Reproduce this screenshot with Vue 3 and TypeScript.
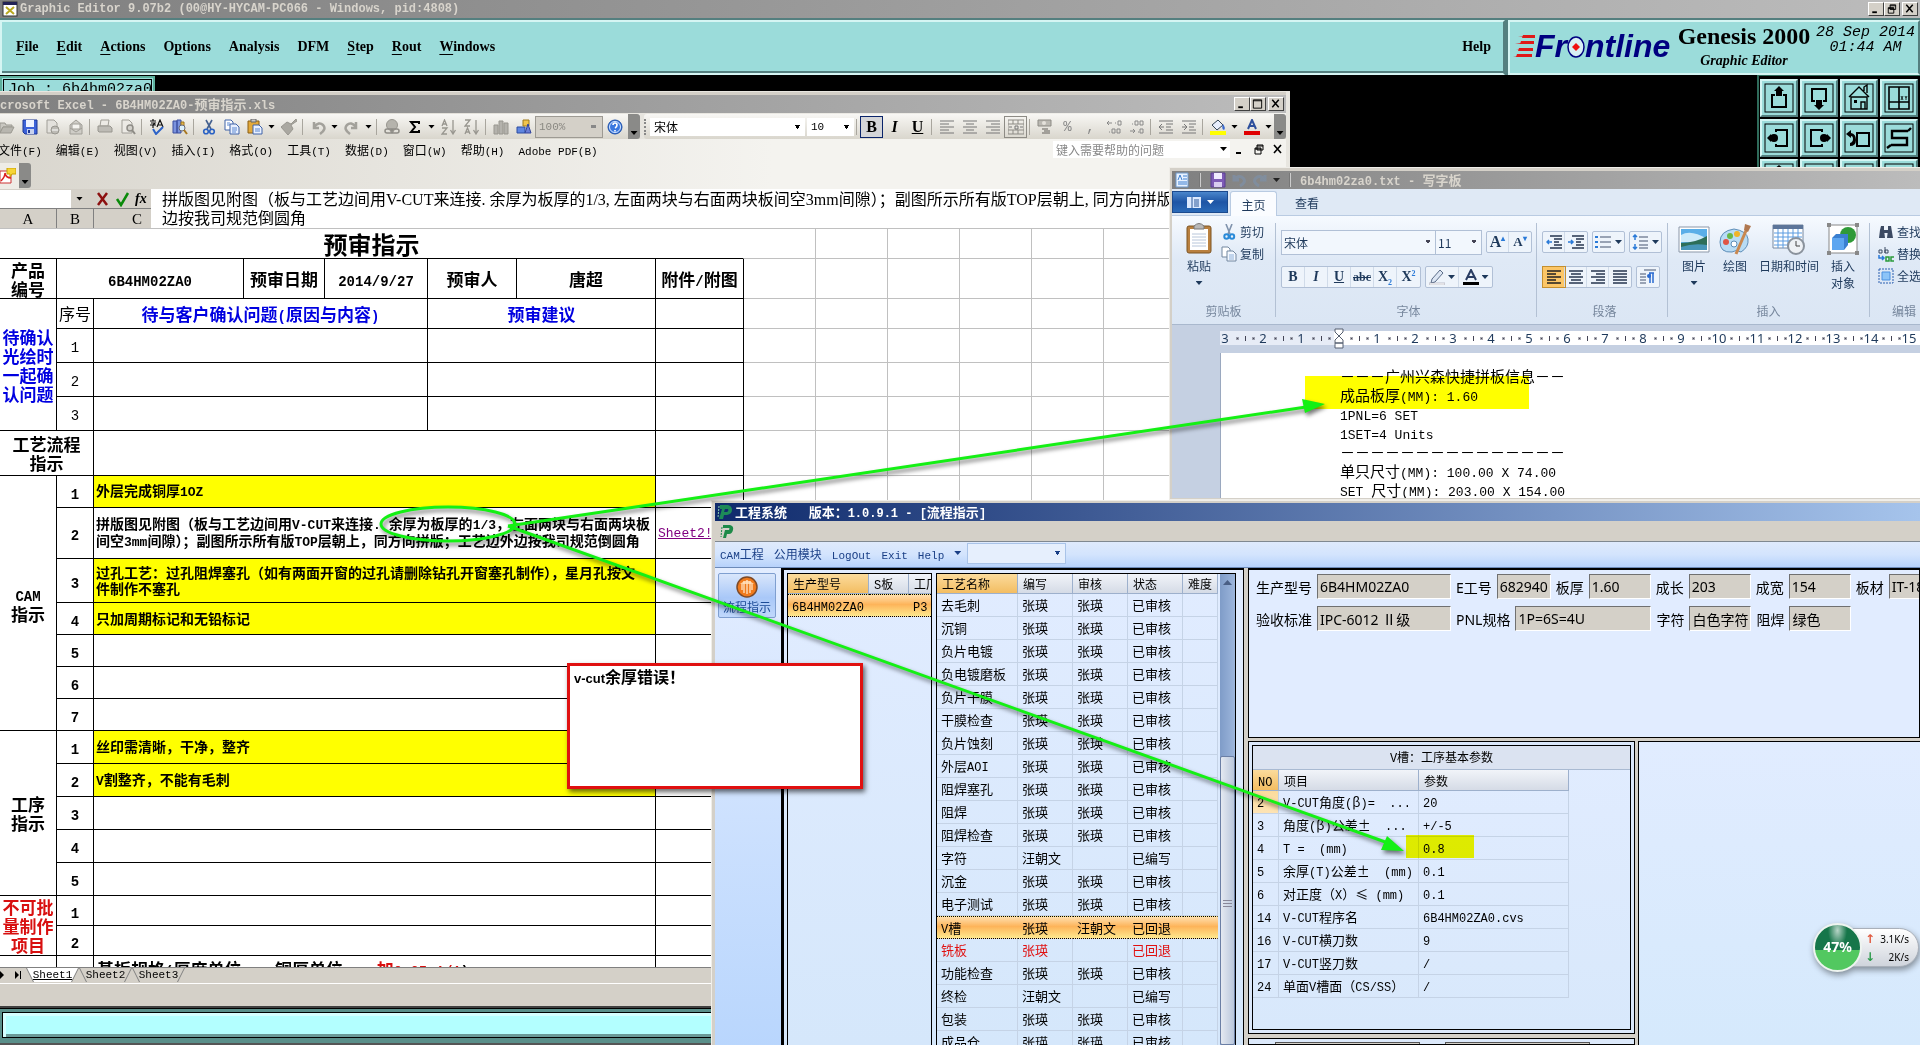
<script setup lang="ts">
import { h } from 'vue'

/* Splits a mixed string so that Latin runs get the half-width monospace face. */
const Mx = (p: { t: string }) =>
  (p.t.match(/[\x20-\x7e]+|[^\x20-\x7e]+/g) || []).map((run) =>
    /^[\x20-\x7e]/.test(run) ? h('span', { class: 'lat' }, run) : run,
  )
Mx.props = ['t']

const genesisMenu = [
  ['', 'F', 'ile'], ['', 'E', 'dit'], ['', 'A', 'ctions'], ['O', 'p', 'tions'],
  ['Analysis', '', ''], ['DFM', '', ''], ['', 'S', 'tep'], ['', 'R', 'out'], ['', 'W', 'indows'],
]

const box = '<rect x="1" y="1" width="28" height="28" fill="none" stroke="#000"/>'
const tools = [
  box + '<path d="M11 12H8v12h14V12h-3" fill="none" stroke="#000" stroke-width="2"/><path d="M15 3l5 5h-2v5h-6V8h-2z"/>',
  box + '<path d="M11 18H8V6h14v12h-3" fill="none" stroke="#000" stroke-width="2"/><path d="M15 27l5-5h-2v-5h-6v5h-2z"/>',
  box + '<path d="M7 14h16v12H7zM5 14L15 4l10 10M20 8V4l3-2v8M17 26v-7h4v7" fill="none" stroke="#000" stroke-width="1.4"/><path d="M10 17h3v3h-3z"/>',
  box + '<path d="M5 4h20v22H5zM15 4v22M5 19h20" fill="none" stroke="#000" stroke-width="1.6"/><path d="M17 13l2 4m0-4l-2 4m4-4l1 2 1-2m-1 2v2" stroke="#000" fill="none" stroke-width=".8"/>',
  box + '<path d="M12 9V7h11v16H12v-2" fill="none" stroke="#000" stroke-width="2"/><path d="M3 15l4-4v2h6v4H7v2z"/><circle cx="10" cy="15" r="4"/>',
  box + '<path d="M18 9V7H7v16h11v-2" fill="none" stroke="#000" stroke-width="2"/><path d="M27 15l-4-4v2h-6v4h6v2z"/><circle cx="20" cy="15" r="4"/>',
  box + '<path d="M13 10h12v13H13z" fill="none" stroke="#000" stroke-width="2"/><path d="M2 11l5-4v3q5 1 5 7t-6 6v-3q3-1 3-4t-2-3v2z"/>',
  box + '<path d="M24 8H8v7h15v7H7M24 8l3-3M7 22l-4 3" fill="none" stroke="#000" stroke-width="2.4"/>',
  box + '<path d="M15 2l5 4H10z"/>', box + '<path d="M15 5v6" stroke="#000"/>', box, box + '<path d="M5 6h20v20H5z" fill="none" stroke="#000" stroke-width="2"/>',
]

const ic: Record<string, string> = {
  open: '<path d="M1 4h5l1 2h6v2H4l-3 6z" fill="#c9c7c0" stroke="#9a9890"/><path d="M4 8h11l-3 6H1z" fill="#b8b6af" stroke="#9a9890"/>',
  save: '<path d="M1 1h14v14H3l-2-2z" fill="#3d62d8" stroke="#1c3795"/><path d="M4 1h8v7H4z" fill="#eef2ff"/><path d="M5 10h7v5H5z" fill="#c8d2ee"/><path d="M6 11h2v3H6z" fill="#1c3795"/>',
  perm: '<path d="M2 1h7l3 3v10H2z" fill="#e3e1dc" stroke="#a09e97"/><circle cx="10" cy="11" r="4" fill="#bdbbb5" stroke="#98968f"/><path d="M7 11h6" stroke="#fff"/>',
  mail: '<path d="M2 6l6-5 6 5v9H2z" fill="#cfcdc7" stroke="#a09e97"/><path d="M4 5h8v5H4z" fill="#f5f4f0" stroke="#a09e97"/><path d="M2 9l6 4 6-4" fill="none" stroke="#a09e97"/>',
  print: '<path d="M4 1h8l-1 6H3z" fill="#eceae5" stroke="#a09e97"/><path d="M1 7h12l2 2v4H2l-1-1z" fill="#bdbbb5" stroke="#98968f"/>',
  preview: '<path d="M2 1h7l3 3v10H2z" fill="#eceae5" stroke="#a09e97"/><circle cx="10" cy="9" r="3" fill="#d2d0ca" stroke="#8e8c86" stroke-width="1.5"/><path d="M12 11l3 4" stroke="#8e8c86" stroke-width="2"/>',
  spell: '<path d="M1 2h6M4 0v2M2 4h4l-2 2v3M1 6h6M8 8l3-7 3 7M9 6h4" fill="none" stroke="#111" stroke-width="1.2"/><path d="M4 10l3 5 7-7" fill="none" stroke="#2d63c8" stroke-width="2"/>',
  research: '<path d="M1 2h4v12H1zM5 1h4v13H5z" fill="#7b93dd" stroke="#3a4fa0"/><path d="M9 3h3v8H9z" fill="#e9b94c" stroke="#9b7420"/><circle cx="10" cy="9" r="3" fill="#d9f0ff" stroke="#667"/><path d="M12 11l3 4" stroke="#a87820" stroke-width="2"/>',
  cut: '<path d="M5 1l5 9M11 1L6 10" stroke="#45618f" stroke-width="1.6"/><circle cx="5" cy="12.500" r="2.300" fill="none" stroke="#2a62c4" stroke-width="1.6"/><circle cx="11" cy="12.500" r="2.300" fill="none" stroke="#2a62c4" stroke-width="1.6"/>',
  copy: '<path d="M1 1h6l2 2v8H1z" fill="#fff" stroke="#3e62a8"/><path d="M6 5h6l3 3v7H6z" fill="#e8f0ff" stroke="#3e62a8"/><path d="M8 9h5M8 11h5M8 13h4M3 4h3M3 6h3" stroke="#5b87d0"/>',
  paste: '<path d="M1 2h11v12H1z" fill="#e3a93a" stroke="#8a5f15"/><path d="M4 0h5v3H4z" fill="#c8c8c8" stroke="#666"/><path d="M6 6h6l3 3v6H6z" fill="#eaf1ff" stroke="#3e62a8"/><path d="M8 10h5M8 12h5" stroke="#5b87d0"/>',
  painter: '<path d="M15 0l-5 5-4-2-6 5 7 8 5-6-2-4 6-4z" fill="#aaa8a1" stroke="#98968f"/>',
  undo: '<path d="M4 3v6h5M4 8q5-6 9-2t-3 9" fill="none" stroke="#a3a19b" stroke-width="2.5"/>',
  redo: '<path d="M12 3v6H7M12 8Q7 2 3 6t3 9" fill="none" stroke="#a3a19b" stroke-width="2.5"/>',
  link: '<circle cx="8" cy="6" r="5.500" fill="#b5b3ac" stroke="#98968f"/><rect x="1" y="10" width="8" height="4" rx="2" fill="none" stroke="#8e8c86" stroke-width="1.5"/><rect x="7" y="10" width="8" height="4" rx="2" fill="none" stroke="#8e8c86" stroke-width="1.5"/>',
  sigma: '<path d="M12 5V3H4l4 5-4 5h8v-2" fill="none" stroke="#000" stroke-width="2"/>',
  sortA: '<path d="M1 7l2.500-6L6 7M2 5h3M1 9h5l-5 6h5M12 1v13M9.500 11l2.500 4 2.500-4" fill="none" stroke="#98968f" stroke-width="1.300"/>',
  sortZ: '<path d="M1 1h5L1 7h5M1 15l2.500-6L6 15M2 13h3M12 1v13M9.500 11l2.500 4 2.500-4" fill="none" stroke="#98968f" stroke-width="1.300"/>',
  chart: '<path d="M1 6h4v9H1zM6 2h4v13H6zM11 4h4v11h-4z" fill="#b4b2ac" stroke="#98968f"/>',
  draw: '<path d="M1 8h8v6H1z" fill="#5f86e0" stroke="#2c4ca0"/><path d="M7 1h6v6H7z" fill="#f2c54d" stroke="#a07a18"/><path d="M9 14l3-9 3 9z" fill="#6b7fd6" stroke="#33459c"/>',
  help: '<circle cx="8" cy="8" r="7" fill="#3a78e0" stroke="#1d4fa8"/><circle cx="8" cy="8" r="5.500" fill="none" stroke="#d8e8ff"/><path d="M6 6q0-2 2-2t2 2-2 3M8 11v1.500" fill="none" stroke="#fff" stroke-width="1.6"/>',
  al: '<path d="M1 2h14M1 5h9M1 8h14M1 11h9M1 14h14" stroke="#777"/>',
  ac: '<path d="M1 2h14M4 5h8M1 8h14M4 11h8M1 14h14" stroke="#777"/>',
  ar: '<path d="M1 2h14M6 5h9M1 8h14M6 11h9M1 14h14" stroke="#777"/>',
  merge: '<path d="M0 1h16v14H0zM0 5h16M0 11h16M5 1v4M10 1v4M5 11v4M10 11v4" fill="none" stroke="#8d8b85"/><path d="M1 8h3M12 8h3M7 7h3v3H7z" fill="none" stroke="#777"/>',
  money: '<path d="M1 1h13v6H1z" fill="#bbb9b3" stroke="#8d8b85"/><circle cx="7" cy="4" r="2" fill="#e4e2dc"/><path d="M5 10h6M7 12h6M5 14h8" stroke="#8d8b85" stroke-width="1.5"/>',
  inc: '<path d="M1 4h5M3 2L1 4l2 2M9 4h1M12 2h3v4h-3zM3 13h1M6 10h3v4H6zM11 10h3v4h-3z" fill="none" stroke="#888"/>',
  dec: '<path d="M3 5h1M6 2h3v4H6zM11 2h3v4h-3zM1 12h5M4 10l2 2-2 2M9 13h1M11 10h3v4h-3z" fill="none" stroke="#888"/>',
  outd: '<path d="M1 2h14M8 5h7M8 8h5M8 11h7M1 14h14M6 8H1M4 5L1 8l3 3" fill="none" stroke="#777"/>',
  ind: '<path d="M1 2h14M8 5h7M8 8h5M8 11h7M1 14h14M1 8h5M3 5l3 3-3 3" fill="none" stroke="#777"/>',
  fill: '<path d="M2 6l6-5 5 5-6 5z" fill="#e8eefc" stroke="#345"/><path d="M13 5q3 4 1 6-3-1-1-6z" fill="#3a6ad0"/><path d="M0 12h16v4H0z" fill="#ff0"/>',
  fcol: '<path d="M4 10L8 1l4 9M5.500 7h5" fill="none" stroke="#2d4f9c" stroke-width="2"/><path d="M0 12h16v4H0z" fill="#e00000"/>',
}
const bar1 = 'open save perm mail | print preview | spell research | cut copy paste v painter | undo v redo v | link sigma v sortA sortZ | chart draw'.split(' ')
const bar2 = 'money % , inc dec | outd ind | fill v fcol v'.split(' ')
const excelMenu = ['文件(F)', '编辑(E)', '视图(V)', '插入(I)', '格式(O)', '工具(T)', '数据(D)', '窗口(W)', '帮助(H)', 'Adobe PDF(B)']

const formula =
  '拼版图见附图（板与工艺边间用V-CUT来连接. 余厚为板厚的1/3, 左面两块与右面两块板间空3mm间隙）；副图所示所有版TOP层朝上, 同方向拼版；工艺边外\n边按我司规范倒圆角'

interface Row { hgt: number; side?: string[]; span?: number; cls?: string; n: string; lines?: string[]; link?: string; hot?: boolean }
const work: Row[] = [
  { hgt: 32, side: ['CAM', '指示'], span: 7, n: '1', lines: ['外层完成铜厚1OZ'], hot: true },
  { hgt: 51, n: '2', lines: ['拼版图见附图（板与工艺边间用V-CUT来连接. 余厚为板厚的1/3，左面两块与右面两块板', '间空3mm间隙）；副图所示所有版TOP层朝上，同方向拼版；工艺边外边按我司规范倒圆角'], link: 'Sheet2!' },
  { hgt: 44, n: '3', lines: ['过孔工艺：过孔阻焊塞孔（如有两面开窗的过孔请删除钻孔开窗塞孔制作），星月孔按文', '件制作不塞孔'], hot: true },
  { hgt: 32, n: '4', lines: ['只加周期标记和无铅标记'], hot: true },
  { hgt: 32, n: '5' }, { hgt: 32, n: '6' }, { hgt: 32, n: '7' },
  { hgt: 33, side: ['工序', '指示'], span: 5, n: '1', lines: ['丝印需清晰，干净，整齐'], hot: true },
  { hgt: 33, n: '2', lines: ['V割整齐，不能有毛刺'], hot: true },
  { hgt: 33, n: '3' }, { hgt: 33, n: '4' }, { hgt: 33, n: '5' },
  { hgt: 30, side: ['不可批', '量制作', '项目'], span: 2, cls: 'red', n: '1' },
  { hgt: 30, n: '2' },
]

const ruler = ['3', '2', '1', '', ...Array.from({ length: 15 }, (_, i) => String(i + 1))]
const doc = ['－－－广州兴森快捷拼板信息－－', '成品板厚(MM): 1.60', '1PNL=6 SET', '1SET=4 Units', '－－－－－－－－－－－－－－－', '单只尺寸(MM): 100.00 X 74.00', 'SET 尺寸(MM): 203.00 X 154.00']

const Z = '张瑛', OK = '已审核'
const steps: string[][] = [
  ['去毛刺', Z, Z, OK], ['沉铜', Z, Z, OK], ['负片电镀', Z, Z, OK], ['负电镀磨板', Z, Z, OK], ['负片干膜', Z, Z, OK],
  ['干膜检查', Z, Z, OK], ['负片蚀刻', Z, Z, OK], ['外层AOI', Z, Z, OK], ['阻焊塞孔', Z, Z, OK], ['阻焊', Z, Z, OK],
  ['阻焊检查', Z, Z, OK], ['字符', '汪朝文', '', '已编写'], ['沉金', Z, Z, OK], ['电子测试', Z, Z, OK],
  ['V槽', Z, '汪朝文', '已回退'], ['铣板', Z, '', '已回退'], ['功能检查', Z, Z, OK], ['终检', '汪朝文', '', '已编写'],
  ['包装', Z, Z, OK], ['成品仓', Z, Z, OK],
]
const params: string[][] = [
  ['2', 'V-CUT角度(β)=  ...', '20'], ['3', '角度(β)公差±  ...', '+/-5'], ['4', 'T =  (mm)', '0.8'],
  ['5', '余厚(T)公差±  (mm)', '0.1'], ['6', '对正度（X）≤ (mm)', '0.1'], ['14', 'V-CUT程序名', '6B4HM02ZA0.cvs'],
  ['16', 'V-CUT横刀数', '9'], ['17', 'V-CUT竖刀数', '/'], ['24', '单面V槽面（CS/SS）', '/'],
]
interface Field { l: string; v: string; w: string }
const form: Field[][] = [
  [{ l: '生产型号', v: '6B4HM02ZA0', w: 'w-l' }, { l: 'E工号', v: '682940', w: 'w-s' }, { l: '板厚', v: '1.60', w: 'w-m' }, { l: '成长', v: '203', w: 'w-m' }, { l: '成宽', v: '154', w: 'w-m' }, { l: '板材', v: 'IT-180A', w: 'w-m' }],
  [{ l: '验收标准', v: 'IPC-6012 Ⅱ级', w: 'w-l' }, { l: 'PNL规格', v: '1P=6S=4U', w: 'w-x' }, { l: '字符', v: '白色字符', w: 'w-m' }, { l: '阻焊', v: '绿色', w: 'w-m' }],
]
const wbtn = {
  min: '<path d="M3 9h5v2H3z"/>',
  max: '<path d="M2 2h9v9H2zM2 3h9" fill="none" stroke="#000"/>',
  res: '<path d="M5 2h6v5H5zM5 3h6M3 5h6v6H3zM3 6h6" fill="none" stroke="#000"/>',
  x: '<path d="M3 2l7 8M10 2l-7 8" fill="none" stroke="#000" stroke-width="1.6"/>',
}
const lines = 'M1 2h14M1 5h9M1 8h14M1 11h9M1 14h14'
</script>

<template>
  <div class="desk">
    <!-- Genesis 2000 -->
    <section class="genesis">
      <header class="tbar gray">
        <svg class="i16" viewBox="0 0 16 16"><rect x="1" y="1" width="14" height="14" fill="#fff" stroke="#333" /><path d="M1 1h14v3H1z" fill="#225" /><path d="M4 6l8 7M12 6l-8 7" stroke="#b8a820" stroke-width="2" /></svg>
        <h1>Graphic Editor 9.07b2 (00@HY-HYCAM-PC066 - Windows, pid:4808)</h1>
        <span class="wbs">
          <button class="wb" aria-label="最小化"><svg viewBox="0 0 13 13" v-html="wbtn.min" /></button>
          <button class="wb" aria-label="还原"><svg viewBox="0 0 13 13" v-html="wbtn.res" /></button>
          <button class="wb gapl" aria-label="关闭"><svg viewBox="0 0 13 13" v-html="wbtn.x" /></button>
        </span>
      </header>
      <div class="ghead">
        <nav class="gmenu">
          <button v-for="m in genesisMenu" :key="m.join('')">{{ m[0] }}<u>{{ m[1] }}</u>{{ m[2] }}</button>
          <button class="ghelp">Help</button>
        </nav>
        <div class="brand">
          <div class="logo">
            <svg width="22" height="24" viewBox="0 0 22 24"><path d="M22 0L5 2h17zM21 6L2 9h18zM20 13L3 15h16zM19 19L0 22h18z" fill="#e01818" /><path d="M10 0h12v3H9zM8 6h13v3H7zM6 13h14v3H5zM4 19h15v3H3z" fill="#e01818" /></svg>
            <span>Fr</span>
            <svg class="eye" width="18" height="24" viewBox="0 0 18 24"><ellipse cx="9" cy="12" rx="8" ry="10" fill="#d8f0f4" stroke="#000080" stroke-width="1.500" /><path d="M9 8l4 4-4 4-4-4z" fill="#f01010" /></svg>
            <span>ntline</span>
          </div>
          <div class="prod"><b>Genesis 2000</b><i>Graphic Editor</i></div>
          <div class="clock"><span>28 Sep 2014</span><span>01:44 AM</span></div>
        </div>
      </div>
      <div class="gwork">
        <div class="job">Job : 6b4hm02za0</div>
        <div class="tools">
          <button v-for="(t, i) in tools" :key="i" :aria-label="'tool ' + (i + 1)"><svg viewBox="0 0 30 30" v-html="t" /></button>
        </div>
      </div>
      <footer class="gfoot"><div /></footer>
    </section>

    <!-- Excel -->
    <section class="excel">
      <header class="tbar gray ext t13">
        <h2><Mx t="crosoft Excel - 6B4HM02ZA0-预审指示.xls" /></h2>
        <span class="wbs">
          <button class="wb" aria-label="最小化"><svg viewBox="0 0 13 13" v-html="wbtn.min" /></button>
          <button class="wb" aria-label="最大化"><svg viewBox="0 0 13 13" v-html="wbtn.max" /></button>
          <button class="wb gapl" aria-label="关闭"><svg viewBox="0 0 13 13" v-html="wbtn.x" /></button>
        </span>
      </header>
      <div class="xbar t12">
        <div class="bar b1">
          <template v-for="(b, i) in bar1" :key="i">
            <i v-if="b === '|'" class="sep" />
            <i v-else-if="b === 'v'" class="arr" />
            <button v-else class="xi" :aria-label="b"><svg class="i16" viewBox="0 0 16 16" v-html="ic[b]" /></button>
          </template>
          <select class="zoom" aria-label="显示比例"><option>100%</option></select>
          <button class="xi" aria-label="help"><svg class="i16" viewBox="0 0 16 16" v-html="ic.help" /></button>
          <span class="grip"><i class="arr" /></span>
        </div>
        <div class="bar b2">
          <i class="dots" />
          <select class="fsel" aria-label="字体"><option>宋体</option></select>
          <select class="ssel" aria-label="字号"><option>10</option></select>
          <i class="sep" />
          <button class="xi fmt on"><b>B</b></button>
          <button class="xi fmt"><i>I</i></button>
          <button class="xi fmt"><u>U</u></button>
          <i class="sep" />
          <button v-for="b in ['al', 'ac', 'ar']" :key="b" class="xi" :aria-label="b"><svg class="i16" viewBox="0 0 16 16" v-html="ic[b]" /></button>
          <button class="xi box" aria-label="merge"><svg class="i16" viewBox="0 0 16 16" v-html="ic.merge" /></button>
          <i class="sep" />
          <template v-for="(b, i) in bar2" :key="i">
            <i v-if="b === '|'" class="sep" />
            <i v-else-if="b === 'v'" class="arr" />
            <button v-else-if="!ic[b]" class="xi pct">{{ b }}</button>
            <button v-else class="xi" :aria-label="b"><svg class="i16" viewBox="0 0 16 16" v-html="ic[b]" /></button>
          </template>
          <span class="grip"><i class="arr" /></span>
        </div>
      </div>
      <nav class="xmenu t12">
        <button v-for="m in excelMenu" :key="m"><Mx :t="m" /></button>
        <span class="ask">
          <input type="text" placeholder="键入需要帮助的问题" aria-label="帮助" />
          <i class="arr" />
        </span>
        <button class="mb" aria-label="最小化"><svg viewBox="0 0 13 13" v-html="wbtn.min" /></button>
        <button class="mb" aria-label="还原"><svg viewBox="0 0 13 13" v-html="wbtn.res" /></button>
        <button class="mb" aria-label="关闭"><svg viewBox="0 0 13 13" v-html="wbtn.x" /></button>
      </nav>
      <div class="pdf">
        <span class="pdfb"><svg class="i16" viewBox="0 0 16 16"><path d="M0 3h11v12H0z" fill="#fff" stroke="#c33" /><path d="M1 13q4-4 4-8 1 5 6 5" fill="none" stroke="#d22" stroke-width="1.500" /><path d="M7 0h9v6h-4l-2 3V6H7z" fill="#f6d536" stroke="#c9a100" /></svg></span>
        <span class="grip"><i class="arr" /></span>
      </div>
      <div class="fbar">
        <div class="fleft">
          <div class="nrow">
            <input class="nbox" aria-label="名称框" />
            <i class="arr" />
            <svg class="i16" viewBox="0 0 16 16"><path d="M3 2l9 12M12 2L3 14" stroke="#8c1010" stroke-width="2.500" /></svg>
            <svg class="i16" viewBox="0 0 16 16"><path d="M2 8l4 6 7-12" fill="none" stroke="#0a8a0a" stroke-width="2.500" /></svg>
            <em>fx</em>
          </div>
          <div class="crow"><span>A</span><span>B</span><span>C</span></div>
        </div>
        <textarea class="ftext" :value="formula" rows="2" wrap="off" aria-label="编辑栏" />
      </div>
      <div class="sheet">
        <table class="grid">
          <colgroup>
            <col class="ca"><col class="cb"><col class="cc"><col class="cd"><col class="ce"><col class="cf"><col class="cg"><col class="ch">
            <col v-for="i in 6" :key="i" class="cx">
          </colgroup>
          <tbody>
            <tr class="h30"><td colspan="8" class="ttl">预审指示</td><td v-for="i in 6" :key="i" class="g" /></tr>
            <tr class="h40 t17">
              <th>产品<br>编号</th><th colspan="2"><Mx t="6B4HM02ZA0" /></th><th>预审日期</th><th><Mx t="2014/9/27" /></th><th>预审人</th><th>唐超</th><th><Mx t="附件/附图" /></th>
              <td v-for="i in 6" :key="i" class="g" />
            </tr>
            <tr class="h30 t17">
              <th rowspan="4" class="blue">待确认<br>光绘时<br>一起确<br>认问题</th><td class="n">序号</td>
              <th colspan="3" class="blue"><Mx t="待与客户确认问题(原因与内容)" /></th><th colspan="2" class="blue">预审建议</th><td />
              <td v-for="i in 6" :key="i" class="g" />
            </tr>
            <tr v-for="k in 3" :key="'q' + k" class="h34 t17">
              <td class="n"><Mx :t="String(k)" /></td><td colspan="3" /><td colspan="2" /><td /><td v-for="i in 6" :key="i" class="g" />
            </tr>
            <tr class="h45 t17"><th colspan="2">工艺流程<br>指示</th><td colspan="5" /><td /><td v-for="i in 6" :key="i" class="g" /></tr>
            <tr v-for="(r, k) in work" :key="k" :class="'h' + r.hgt">
              <th v-if="r.side" :rowspan="r.span" class="t17" :class="r.cls">
                <template v-for="(s, j) in r.side" :key="j"><br v-if="j"><Mx :t="s" /></template>
              </th>
              <th class="t17"><Mx :t="r.n" /></th>
              <td colspan="5" class="txt t14" :class="{ hot: r.hot }"><div v-for="l in r.lines" :key="l"><Mx :t="l" /></div></td>
              <td class="lk"><a v-if="r.link" href="#">{{ r.link }}</a></td>
              <td v-for="i in 6" :key="i" class="g" />
            </tr>
            <tr class="h45 t17">
              <th /><th />
              <td colspan="5" class="spec"><Mx t="基板规格(厚度单位    铜厚单位    " /><span class="red"><Mx t="加0.05 1/1" /></span><Mx t=")" /></td>
            </tr>
          </tbody>
        </table>
      </div>
      <div class="tabs">
        <svg width="26" height="15" viewBox="0 0 26 15"><path d="M0 3l4 4-4 4zM15 3l4 4-4 4zM20 3h1v8h-1z" /></svg>
        <button class="cur"><span>Sheet1</span></button><button><span>Sheet2</span></button><button><span>Sheet3</span></button>
      </div>
      <div class="xstat" />
    </section>

    <!-- WordPad -->
    <section class="word">
      <header class="tbar gray t13">
        <svg class="i16" viewBox="0 0 16 16"><path d="M2 1h12v14H2z" fill="#e8f2ff" stroke="#6d97c8" /><path d="M4 8l2-5 2 5M9 4h4M9 7h4M4 10h9M4 12h9" stroke="#3c7fd0" fill="none" /></svg>
        <i class="vb" />
        <svg class="i16" viewBox="0 0 16 16"><path d="M1 1h14v14H1z" fill="#7d5bb5" stroke="#5b3f92" /><path d="M4 1h8v6H4z" fill="#f0eaff" /><path d="M4 10h8v5H4z" fill="#d8cdf0" /></svg>
        <svg class="i16 dim" viewBox="0 0 16 16"><path d="M3 3v5h5M3 8q5-6 9-2t-3 8" fill="none" stroke="#7d92ad" stroke-width="3" /></svg>
        <svg class="i16 dim" viewBox="0 0 16 16"><path d="M13 3v5H8M13 8Q8 2 4 6t3 8" fill="none" stroke="#7d92ad" stroke-width="3" /></svg>
        <i class="arr" /><i class="vb" />
        <h2><Mx t="6b4hm02za0.txt - 写字板" /></h2>
      </header>
      <div class="wtabs">
        <button class="app" aria-label="菜单"><svg width="16" height="13" viewBox="0 0 16 13"><path d="M1 1h14v11H1z" fill="#dbe9ff" /><path d="M6 1v11M8 4h5M8 6h5M8 8h5M8 10h5" stroke="#2b5797" /></svg><i class="arr w" /></button>
        <button class="tab on">主页</button><button class="tab">查看</button>
      </div>
      <div class="ribbon">
        <div class="grp g1">
          <div class="gb">
            <button class="big">
              <svg width="28" height="32" viewBox="0 0 28 32"><rect x="2" y="3" width="24" height="27" rx="2" fill="#b9803f" stroke="#7d5423" /><path d="M5 6h18v21H5z" fill="#fff" /><path d="M7 11h14M7 14h14M7 17h14M7 20h14M7 23h14" stroke="#b8c6da" /><path d="M9 3q5-5 10 0v3H9z" fill="#b8b8b8" stroke="#777" /></svg>
              粘贴<i class="arr" />
            </button>
            <div class="col">
              <button><svg class="i16" viewBox="0 0 16 16"><path d="M5 0l4 10M11 0L7 10" stroke="#8093ad" stroke-width="1.600" /><circle cx="5.500" cy="12.500" r="2.200" fill="none" stroke="#2a8ad8" stroke-width="2" /><circle cx="11" cy="12.500" r="2.200" fill="none" stroke="#2a8ad8" stroke-width="2" /></svg>剪切</button>
              <button><svg class="i16" viewBox="0 0 16 16"><path d="M1 1h6l2 2v8H1z" fill="#fff" stroke="#73879f" /><path d="M6 5h6l3 3v7H6z" fill="#f3f8ff" stroke="#73879f" /><path d="M8 9h5M8 11h5M8 13h5" stroke="#8fb1da" /></svg>复制</button>
            </div>
          </div>
          <p>剪贴板</p>
        </div>
        <div class="grp g2">
          <div class="gr">
            <span class="cmb"><select class="wf" aria-label="字体"><option>宋体</option></select><select class="ws" aria-label="字号"><option>11</option></select></span>
            <span class="set"><button class="sf">A<sup>▴</sup></button><button class="sf sm">A<sup>▾</sup></button></span>
          </div>
          <div class="gr">
            <span class="set fm"><button><b>B</b></button><button><i>I</i></button><button><u>U</u></button><button class="st"><s>abc</s></button><button>X<sub>2</sub></button><button>X<sup>2</sup></button></span>
            <span class="set hl"><button aria-label="突出显示"><svg class="i16" viewBox="0 0 16 16"><path d="M3 10l8-9 3 3-8 9-4 1z" fill="#dce6f4" stroke="#5b6d88" /><path d="M0 14h16v2H0z" fill="#fff" stroke="#889" stroke-width=".500" /></svg><i class="arr" /></button><button aria-label="字体颜色"><svg class="i16" viewBox="0 0 16 16"><path d="M3 11L8 1l5 10M5 8h6" fill="none" stroke="#2a3d63" stroke-width="2" /><path d="M0 13h16v3H0z" /></svg><i class="arr" /></button></span>
          </div>
          <p>字体</p>
        </div>
        <div class="grp g3">
          <div class="gr">
            <span class="set"><button aria-label="减少缩进"><svg class="i16" viewBox="0 0 16 16"><path d="M4 2h12M8 5h8M8 8h5M8 11h8M4 14h12" stroke="#26344f" stroke-width="1.500" /><path d="M6 8H1M3 6L1 8l2 2" stroke="#2a7ad8" stroke-width="1.500" fill="none" /></svg></button><button aria-label="增加缩进"><svg class="i16" viewBox="0 0 16 16"><path d="M4 2h12M8 5h8M8 8h5M8 11h8M4 14h12" stroke="#26344f" stroke-width="1.500" /><path d="M0 8h5M3 6l2 2-2 2" stroke="#2a7ad8" stroke-width="1.500" fill="none" /></svg></button></span>
            <span class="set"><button class="wide" aria-label="列表"><svg class="i16" viewBox="0 0 16 16"><path d="M5 3h11M5 8h11M5 13h11" stroke="#44536e" /><path d="M0 2h3v2H0zM0 7h3v2H0zM0 12h3v2H0z" fill="#2a7ad8" /></svg><i class="arr" /></button></span>
            <span class="set"><button class="wide" aria-label="行距"><svg class="i16" viewBox="0 0 16 16"><path d="M7 3h9M7 7h9M7 11h9M7 14h9" stroke="#44536e" /><path d="M3 1v5M1 3l2-2 2 2M3 10v5M1 13l2 2 2-2" stroke="#2a7ad8" stroke-width="1.500" fill="none" /></svg><i class="arr" /></button></span>
          </div>
          <div class="gr">
            <span class="set"><button class="sel" aria-label="左对齐"><svg class="i16" viewBox="0 0 16 16"><path :d="lines" stroke="#222" stroke-width="1.500" /></svg></button><button aria-label="居中"><svg class="i16" viewBox="0 0 16 16"><path d="M1 2h14M3 5h10M1 8h14M3 11h10M1 14h14" stroke="#26344f" stroke-width="1.500" /></svg></button><button aria-label="右对齐"><svg class="i16" viewBox="0 0 16 16"><path d="M1 2h14M6 5h9M1 8h14M6 11h9M1 14h14" stroke="#26344f" stroke-width="1.500" /></svg></button><button aria-label="两端对齐"><svg class="i16" viewBox="0 0 16 16"><path d="M1 2h14M1 5h14M1 8h14M1 11h14M1 14h14" stroke="#26344f" stroke-width="1.500" /></svg></button></span>
            <span class="set"><button aria-label="段落"><svg class="i16" viewBox="0 0 16 16"><path d="M4 1h12M0 5h6M0 8h6M0 11h6M0 14h6" stroke="#44536e" /><path d="M9 4h5M10 4v10M13 4v10" stroke="#2a6ad0" stroke-width="1.500" /><circle cx="9" cy="7" r="2" fill="#2a6ad0" /></svg></button></span>
          </div>
          <p>段落</p>
        </div>
        <div class="grp g4">
          <div class="gb">
            <button class="big"><svg width="32" height="32" viewBox="0 0 32 32"><path d="M1 4h30v25H1z" fill="#fff" stroke="#8b97a8" /><path d="M3 6h26v21H3z" fill="#5aaee8" /><path d="M3 12q10-6 26 4v3H3z" fill="#cdeafa" /><path d="M3 20q14 0 26-7v14H3z" fill="#2d6e58" /><path d="M3 24q12-4 26-2v5H3z" fill="#4896b8" /></svg>图片<i class="arr" /></button>
            <button class="big"><svg width="32" height="32" viewBox="0 0 32 32"><path d="M15 6Q1 8 1 19t12 10q4-3 9 0 8-5 7-13T15 6z" fill="#b8dcf5" stroke="#5d8db8" /><circle cx="7" cy="19" r="3" fill="#e05545" /><circle cx="11" cy="13" r="3" fill="#68b848" /><circle cx="18" cy="11" r="3" fill="#f0b428" /><circle cx="15" cy="21" r="3" fill="#fff" stroke="#5d8db8" /><path d="M29 3L17 31" stroke="#c98850" stroke-width="3" /><path d="M26 1l6 2-3 6-4-2z" fill="#b07850" /></svg>绘图</button>
            <button class="big wd"><svg width="34" height="32" viewBox="0 0 34 32"><path d="M1 2h30v23H1z" fill="#fff" stroke="#7688a0" /><path d="M1 2h30v4H1z" fill="#5b7499" /><path d="M2 10h28M2 14h28M2 18h28M2 22h28M6 6v19M11 6v19M16 6v19M21 6v19M26 6v19" stroke="#5a9be0" /><circle cx="24" cy="23" r="8" fill="#eef1f5" stroke="#8a929c" stroke-width="2" /><path d="M24 18v5h4" fill="none" stroke="#444" /></svg>日期和时间</button>
            <button class="big"><svg width="32" height="32" viewBox="0 0 32 32"><path d="M2 2h28v28H2z" fill="#fff" stroke="#888" /><circle cx="21" cy="12" r="8" fill="#2f9a38" /><path d="M5 15l4-4h12v11l-4 5H5z" fill="#3a7fd0" /><path d="M5 15h12v12H5z" fill="#5ea6f0" /><path d="M0 0h4v4H0zM28 0h4v4h-4zM0 28h4v4H0zM28 28h4v4h-4z" fill="#888" /></svg>插入<br>对象</button>
          </div>
          <p>插入</p>
        </div>
        <div class="grp g5">
          <div class="col">
            <button><svg class="i16" viewBox="0 0 16 16"><path d="M3 2h3v4l1 8H1l1-8zM10 2h3l2 12H9l1-8zM6 6h4v3H6z" fill="#3c4a63" /></svg>查找</button>
            <button><svg class="i16" viewBox="0 0 16 16"><path d="M1 4h3v3H1zM7 1v6M7 4h3v3H7z" fill="none" stroke="#3c4a63" /><path d="M1 9v3h5M4 10l2 2-2 2" fill="none" stroke="#2a7ad8" stroke-width="1.500" /><path d="M8 11h3v4H8zM16 11h-3v4h3" fill="none" stroke="#2a9a3a" stroke-width="1.500" /></svg>替换</button>
            <button><svg class="i16" viewBox="0 0 16 16"><path d="M1 1h14v14H1z" fill="none" stroke="#2b5fb0" stroke-dasharray="2 1" /><path d="M4 4h8v8H4z" fill="#8cc4f8" stroke="#4a90e0" /></svg>全选</button>
          </div>
          <p>编辑</p>
        </div>
      </div>
      <div class="rul">
        <div v-for="(n, i) in ruler" :key="i" class="ru" :class="{ off: i < 3 }">
          <b v-if="n">{{ n }}</b>
          <svg v-else class="mk" width="10" height="21" viewBox="0 0 10 21"><path d="M1 1h8v3L5 8 1 4zM5 8l4 4v3H1v-3zM1 15h8v5H1z" fill="#fff" stroke="#555f70" /></svg>
          <i class="dt" /><i class="tk" /><i class="dt" />
        </div>
      </div>
      <div class="wdoc"><div class="page t15"><p v-for="(l, i) in doc" :key="i"><Mx :t="l" /></p></div></div>
    </section>

    <!-- Engineering system -->
    <section class="eng">
      <header class="tbar blue t13">
        <svg class="i16" viewBox="0 0 16 16"><path d="M3 1h8q4 1 4 5t-5 5H7l-1 4H2L5 5l3 0-1 3h3q2-1 1-3H3z" fill="#1d8a58" /><path d="M2 2l-1 12" stroke="#8cd0b0" stroke-dasharray="2 1" /></svg>
        <h2><Mx t="工程系统   版本：1.0.9.1 - [流程指示]" /></h2>
      </header>
      <div class="mdi"><svg class="i16" viewBox="0 0 16 16"><path d="M4 2h7q4 1 3 5t-4 4H8l-1 4H4l2-8h4q1-2 0-2H4z" fill="#1d8a48" /><path d="M3 4l-1 10" stroke="#1d8a48" stroke-dasharray="2 1" /></svg></div>
      <nav class="emenu t12">
        <button><Mx t="CAM工程" /></button><button>公用模块</button><button><Mx t="LogOut" /></button><button><Mx t="Exit" /></button><button><Mx t="Help" /></button>
        <i class="arr" />
        <select aria-label="选择"><option /></select>
      </nav>
      <div class="ebody">
        <aside class="enav">
          <button>
            <svg width="24" height="24" viewBox="0 0 24 24"><circle cx="12" cy="12" r="10" fill="#f07a1c" stroke="#7d4a28" stroke-width="1.500" /><path d="M5 9q7-7 14 0" fill="#ffd0a0" /><path d="M9 6v12M12 5v14M15 6v12M7 9v6M17 9v6" stroke="#ffe4c4" stroke-width="1.300" /></svg>
            流程指示
          </button>
        </aside>
        <div class="elists">
          <div class="lst l1">
            <table class="et t13">
              <colgroup><col class="k1"><col class="k2"><col class="k3"></colgroup>
              <thead class="t12"><tr><th class="or">生产型号</th><th><Mx t="S板" /></th><th>工厂</th></tr></thead>
              <tbody><tr class="pick"><td><Mx t="6B4HM02ZA0" /></td><td /><td><Mx t="P3" /></td></tr></tbody>
            </table>
          </div>
          <div class="lst l2">
            <table class="et t13 rows">
              <colgroup><col class="k1"><col class="k4"><col class="k4"><col class="k4"><col class="k5"></colgroup>
              <thead class="t12"><tr><th class="or">工艺名称</th><th>编写</th><th>审核</th><th>状态</th><th>难度</th></tr></thead>
              <tbody>
                <tr v-for="(s, i) in steps" :key="i" :class="{ pick: i === 14, bad: i === 15 }"><td v-for="(c, j) in s" :key="j"><Mx :t="c" /></td><td /></tr>
              </tbody>
            </table>
            <div class="sb"><i class="up" /><div class="thumb"><i /></div></div>
          </div>
        </div>
        <div class="eright">
          <form class="efrm">
            <div v-for="(r, i) in form" :key="i" class="frow">
              <template v-for="f in r" :key="f.l"><label :for="f.l">{{ f.l }}</label><input :id="f.l" :class="f.w" :value="f.v" readonly></template>
            </div>
          </form>
          <div class="elow">
            <div class="ecol">
              <div class="pout">
                <div class="pin t13">
                  <div class="pt t12"><Mx t="V槽：工序基本参数" /></div>
                  <table class="et par">
                    <colgroup><col class="p1"><col class="p2"><col class="p3"></colgroup>
                    <thead class="t12"><tr><th class="or"><Mx t="NO" /></th><th>项目</th><th>参数</th></tr></thead>
                    <tbody><tr v-for="(p, i) in params" :key="i"><td v-for="(c, j) in p" :key="j" :class="{ or2: !i && !j }"><Mx :t="c" /></td></tr></tbody>
                  </table>
                </div>
              </div>
              <div class="pbot"><input aria-label="备注一" readonly><input aria-label="备注二" readonly></div>
            </div>
            <div class="eblank" />
          </div>
        </div>
      </div>
    </section>

    <!-- Network speed ball -->
    <div class="speed">
      <div class="ball">47%</div>
      <div class="pill"><span><i class="r">↑</i>3.1K/s</span><span><i>↓</i>2K/s</span></div>
    </div>

    <!-- Review marks -->
    <div class="mark m1" />
    <div class="mark m2" />
    <svg class="ink">
      <ellipse cx="448" cy="524" rx="67" ry="17" />
      <path d="M508 526L1306 407M508 526L1388 843" />
      <path class="tip" d="M1325 404l-23-5 3 14zM1404 851l-17-15-6 14z" />
    </svg>
    <div class="note"><span>v-cut</span>余厚错误！</div>
  </div>
</template>

<style>
body { overflow: hidden; }
.lat { font-family: "Liberation Mono", monospace; white-space: pre; line-height: 1; }
.t12 .lat { font-size: 11px; }
.t13 .lat { font-size: 12px; }
.t14 .lat { font-size: 13px; }
.t15 .lat { font-size: 13px; }
.t17 .lat { font-size: 14px; }
.tbar .lat { font-size: 12px; }
</style>

<style scoped>
.desk { position: relative; height: 100vh; overflow: hidden; background: #000; font-family: "Noto Sans CJK SC", sans-serif; font-size: 12px; color: #000; }
.desk * { box-sizing: border-box; }
button, input, select, textarea { font: inherit; color: inherit; margin: 0; padding: 0; border: 0; background: none; border-radius: 0; }
button { white-space: nowrap; }
select { appearance: none; }
h1, h2, p { margin: 0; font-weight: inherit; font-size: inherit; }
.i16 { width: 16px; height: 16px; flex: none; display: block; }
.arr { flex: none; width: 7px; height: 4px; background: currentColor; clip-path: polygon(0 0, 100% 0, 50% 100%); }
.t12 { font-size: 12px; } .t13 { font-size: 13px; } .t14 { font-size: 14px; } .t15 { font-size: 15px; } .t17 { font-size: 17px; }

.tbar { display: flex; align-items: center; height: 18px; line-height: 18px; flex: none; font-weight: bold; }
.tbar h1 { font: bold 12px/18px "Liberation Mono", monospace; }
.tbar h2 { font-size: 13px; line-height: 18px; white-space: pre; }
.gray { background: linear-gradient(90deg, #808080, #bcbcbc); color: #d8d4cc; }
.wbs { margin-left: auto; display: flex; padding-right: 2px; }
.wb { width: 16px; height: 14px; background: #d4d0c8; border: 1px solid; border-color: #fff #404040 #404040 #fff; display: flex; }
.wb svg { width: 13px; height: 12px; }
.gapl { margin-left: 2px; }

.genesis { position: absolute; inset: 0; display: flex; flex-direction: column; }
.genesis > .tbar { padding-left: 2px; gap: 2px; }
.ghead { display: flex; height: 57px; flex: none; background: #547f7f; padding-top: 2px; gap: 3px; }
.gmenu { flex: 1; display: flex; align-items: center; gap: 18px; padding: 0 12px 2px 14px; background: #9bdcda; border: 2px solid; border-color: #d5f5f3 #547f7f #d5f5f3 #d5f5f3; box-shadow: inset 0 -2px #547f7f; font: bold 14px "Liberation Serif", serif; }
.gmenu u { text-underline-offset: 3px; }
.ghelp { margin-left: auto; }
.brand { width: 412px; flex: none; background: #9bdcda; border: 2px solid #d5f5f3; border-right-color: #547f7f; display: flex; padding-left: 3px; }
.logo { display: flex; align-items: center; font: italic bold 32px "Liberation Sans", sans-serif; color: #000080; width: 164px; padding-bottom: 2px; }
.prod { display: flex; flex-direction: column; align-items: center; font: bold 14px/14px "Liberation Serif", serif; width: 134px; }
.prod b { font-size: 24px; line-height: 28px; white-space: nowrap; }
.prod i { padding-top: 4px; }
.clock { display: flex; flex-direction: column; align-items: center; font: italic 15px/15px "Liberation Mono", monospace; padding: 3px 0 0 5px; }
.gwork { flex: 1; display: flex; align-items: flex-start; justify-content: space-between; min-height: 0; overflow: hidden; }
.job { width: 155px; height: 30px; margin-top: 1px; border: 2px solid #5cb09c; background: #9bdcda; outline: 1px solid #000; outline-offset: -4px; padding: 3px 0 0 6px; font: 15px/17px "Liberation Mono", monospace; white-space: nowrap; }
.tools { display: grid; grid-template-columns: repeat(4, 38px); gap: 2px; border-left: 2px solid #2f6b5b; padding: 3px 2px 3px 1px; border-top: 1px solid #2f6b5b; }
.tools button { height: 38px; background: #9bdcda; border: 2px solid; border-color: #d5f5f3 #547f7f #547f7f #d5f5f3; display: flex; align-items: center; justify-content: center; }
.tools svg { width: 30px; height: 30px; }
.gfoot { height: 36px; flex: none; background: #5a8f8a; padding: 3px 0 5px 2px; border-bottom: 2px solid #555; }
.gfoot div { height: 26px; background: #b3ffff; border: 1px solid #000; box-shadow: inset 3px 3px #d5ffff, inset 0 -3px #6a9a98; }

.excel { position: absolute; left: 0; top: 91px; bottom: 37px; width: 1290px; background: #d4d0c8; border: solid #e8e6e0; border-width: 1px 4px 0 0; padding-top: 3px; display: flex; flex-direction: column; overflow: hidden; border-bottom: 2px solid #404040; }
.xbar { display: flex; height: 26px; padding-top: 1px; background: linear-gradient(90deg, #d9d6ce, #f4f3ef); flex: none; }
.bar { display: flex; align-items: center; height: 25px; background: linear-gradient(#f8f7f4, #d9d6cd); }
.b1 { width: 640px; }
.b1 > .xi:first-child { margin-left: -5px; }
.b2 { flex: 1; border-radius: 3px 0 0 3px; margin-left: 4px; }
.xi { width: 23px; height: 22px; flex: none; display: flex; align-items: center; justify-content: center; }
.bar > .arr { margin: 0 2px; }
.sep { width: 1px; height: 16px; background: #a9a69e; margin: 0 3px 0 2px; flex: none; }
.zoom { width: 68px; height: 22px; border: 1px solid #9d9a93; background: #d4d0c8 linear-gradient(#888, #888) no-repeat right 6px center / 5px 3px; color: #8a8882; font: 11px "Liberation Mono", monospace; padding-left: 3px; }
.grip { width: 12px; height: 25px; margin-left: auto; background: #8a8a88; border-radius: 0 3px 3px 0; display: flex; align-items: flex-end; justify-content: center; padding-bottom: 4px; }
.dots { width: 6px; height: 16px; border-left: 2px dotted #888; }
.fsel, .ssel { height: 18px; background: #fff; padding-left: 4px; background-image: conic-gradient(from -35deg at 50% 100%, #000 70deg, transparent 0); background-repeat: no-repeat; background-size: 7px 4px; background-position: right 4px center; }
.fsel { width: 155px; } .ssel { width: 47px; margin-left: 2px; font: 11px "Liberation Mono", monospace; }
.fmt { font: 16px "Liberation Serif", serif; font-weight: bold; }
.on { border: 1px solid #0a246a; background: #d4d5d8; }
.box { border: 1px solid #8d8b85; }
.pct { color: #888; font: 14px "Liberation Mono", monospace; }
.xmenu { display: flex; align-items: center; height: 24px; gap: 14px; flex: none; background: linear-gradient(90deg, #d9d6ce, #f4f3ef 60%); padding: 0 2px 4px 0; }
.xmenu > button:first-child { margin-left: -2px; }
.ask { margin-left: auto; width: 177px; height: 17px; background: #fff; display: flex; align-items: center; padding: 0 3px; }
.ask input { flex: 1; min-width: 0; height: 17px; }
.ask input::placeholder { color: #888; opacity: 1; }
.mb { width: 13px; height: 13px; flex: none; }
.mb + .mb { margin-left: -8px; }
.ask + .mb { margin-left: -11px; }
.mb svg { width: 13px; height: 13px; display: block; }
.pdf { display: flex; height: 26px; flex: none; background: linear-gradient(90deg, #d9d6ce, #f4f3ef 60%); }
.pdf .grip { margin: 0; }
.pdfb { width: 19px; display: flex; align-items: center; background: #eeece6; }
.fbar { display: flex; height: 40px; flex: none; border-bottom: 1px solid #c0c0c0; }
.fleft { width: 151px; flex: none; display: flex; flex-direction: column; }
.nrow { height: 20px; display: flex; align-items: center; gap: 4px; border-bottom: 1px solid #808080; }
.nbox { width: 71px; height: 18px; background: #fff; }
.nrow .arr { margin: 0 8px 0 1px; }
.nrow em { font: italic bold 14px "Liberation Serif", serif; }
.crow { flex: 1; display: flex; font: 15px/21px "Liberation Serif", serif; text-align: center; }
.crow span { width: 57px; border-right: 1px solid #808080; height: 19px; }
.crow span:nth-child(2) { width: 37px; }
.crow span:nth-child(3) { flex: 1; border: 0; text-align: right; padding-right: 9px; }
.ftext { flex: 1; height: 39px; background: #fff; resize: none; overflow: hidden; padding: 1px 0 0 11px; font: 16px/19px "Liberation Serif", "Noto Sans CJK SC", serif; white-space: pre; outline: 0; }

.sheet { flex: 1; min-height: 0; overflow: hidden; background: #fff; border-bottom: 1px solid #808080; }
.grid { border-collapse: separate; border-spacing: 0; table-layout: fixed; width: 1176px; }
.ca { width: 57px; } .cb { width: 37px; } .cc { width: 150px; } .cd { width: 81px; } .ce { width: 103px; } .cf { width: 89px; } .cg { width: 139px; } .ch { width: 88px; } .cx { width: 72px; }
.grid td, .grid th { padding: 0; border: solid #000; border-width: 0 1px 1px 0; text-align: center; line-height: 19px; font-weight: bold; overflow: hidden; white-space: nowrap; }
.grid td.g { border-color: #c0c0c0; }
.grid td.n { font-weight: normal; font-size: 16px; }
.grid td.ttl { font-size: 24px; line-height: 26px; border-right-color: #fff; }
.grid td.txt { text-align: left; padding: 0 0 2px 2px; line-height: 16px; }
.grid td.hot { background: #ff0; }
.grid td.lk { text-align: left; padding-left: 2px; font: 13px "Liberation Mono", monospace; }
.lk a { color: #800080; }
.grid .blue { color: #0000e0; }
.grid .red, .red { color: #d81010; }
.grid td.spec { text-align: left; vertical-align: top; padding: 3px 0 0 3px; }
.h30 { height: 30px; } .h32 { height: 32px; } .h33 { height: 33px; } .h34 { height: 34px; } .h40 { height: 40px; } .h44 { height: 44px; } .h45 { height: 45px; } .h51 { height: 51px; }
.tabs { height: 16px; flex: none; display: flex; border-bottom: 1px solid #fff; font: 11px/14px "Liberation Mono", monospace; }
.tabs button { height: 14px; width: 53px; background: #808080; clip-path: polygon(0 0, 100% 0, calc(100% - 7px) 100%, 7px 100%); padding: 0 1px 1px; }
.tabs button span { display: block; background: #d4d0c8; clip-path: polygon(0 0, 100% 0, calc(100% - 7px) 100%, 7px 100%); }
.tabs .cur span { background: #fff; text-decoration: underline; }
.xstat { height: 22px; flex: none; }

.word { position: absolute; left: 1169px; right: 0; top: 167px; bottom: 545px; background: #d4d0c8; border: solid #efede8; border-width: 1px 0 1px 1px; padding: 3px 0 1px 2px; display: flex; flex-direction: column; overflow: hidden; color: #1e395b; }
.word .tbar { gap: 5px; padding-left: 2px; }
.word .tbar .arr { color: #222; }
.vb { width: 2px; height: 14px; border-left: 1px solid #777; border-right: 1px solid #ccc; margin: 0 4px; }
.dim { opacity: .6; }
.wtabs { display: flex; height: 27px; background: #dfe9f5; border-bottom: 1px solid #b9cbe2; padding-top: 2px; flex: none; }
.app { width: 56px; height: 22px; background: linear-gradient(#4a86cc, #1e55a5 50%, #2a6ab8); border: 1px solid #1b4a8e; display: flex; align-items: center; justify-content: center; gap: 5px; }
.w { color: #fff; }
.tab { width: 56px; height: 23px; }
.tab.on { width: 47px; margin: 0 2px; background: #fafcff; border: solid #b9cbe2; border-width: 1px 1px 0; border-radius: 3px 3px 0 0; height: 25px; }
.ribbon { display: flex; height: 109px; flex: none; background: linear-gradient(#f6faff, #dfe9f6 40%, #dbe6f4); border-bottom: 1px solid #a9b8cd; padding: 7px 0; }
.grp { flex: none; border-right: 1px solid #b3c1d4; display: flex; flex-direction: column; }
.grp p { margin-top: auto; text-align: center; color: #77879d; line-height: 12px; }
.g1 { width: 104px; } .g2 { width: 261px; padding-left: 5px; } .g3 { width: 131px; padding-left: 5px; } .g4 { width: 202px; } .g5 { width: 60px; padding-left: 8px; border: 0; }
.gb { display: flex; gap: 4px; padding-left: 9px; }
.big { display: flex; flex-direction: column; align-items: center; line-height: 17px; width: 36px; }
.big svg { margin-bottom: 2px; flex: none; }
.big .arr { margin-top: 7px; }
.big.wd { width: 62px; }
.g4 .gb { gap: 5px; padding-left: 8px; }
.col { display: flex; flex-direction: column; gap: 4px; }
.col button { display: flex; align-items: center; gap: 3px; line-height: 18px; }
.gr { display: flex; gap: 4px; height: 22px; margin: 8px 0 6px; align-items: center; }
.gr + .gr { margin-top: 7px; }
.cmb { display: flex; }
.cmb select { height: 25px; border: 1px solid #b1c0d6; background: #f2f7fd conic-gradient(from -35deg at 50% 100%, #445 70deg, transparent 0) no-repeat right 4px center / 6px 4px; padding-left: 2px; }
.wf { width: 155px; } .ws { width: 47px; margin-left: -1px; }
.set { display: flex; height: 22px; border: 1px solid #b1c0d6; border-radius: 2px; background: #eef4fb; }
.set button { width: 22px; display: flex; align-items: center; justify-content: center; border-right: 1px solid #d0dbe9; }
.set button:last-child { border: 0; }
.fm button { width: 23px; font: bold 14px "Liberation Serif", serif; }
.fm .st { font-size: 12px; }
.set sub, .set sup { font-size: 8px; color: #2a7ad8; line-height: 8px; align-self: flex-start; margin-top: 3px; }
.set sub { align-self: flex-end; }
.sf { font: bold 16px "Liberation Serif", serif; }
.sm { font-size: 13px; }
.hl button { width: 33px; gap: 3px; } .wide { gap: 4px; }
.set .wide { width: 31px; }
.set .sel { background: #fcc667; outline: 1px solid #c48f2f; }
.rul { height: 28px; flex: none; display: flex; padding: 6px 0 8px 48px; background: #c5d0e2; overflow: hidden; }
.ru { width: 38px; flex: none; height: 14px; display: flex; align-items: center; justify-content: space-between; background: #fff; padding-right: 4px; }
.ru.off { background: #e7ecf6; }
.ru b { font: 13px/12px "Noto Sans", sans-serif; width: 10px; display: flex; justify-content: center; }
.dt { width: 1px; height: 1px; background: #445; outline: 1px solid #4457; outline-offset: -1px; }
.ru .tk { width: 1px; height: 5px; background: #445; }
.mk { flex: none; }
.wdoc { flex: 1; min-height: 0; display: flex; padding-left: 48px; background: #c5d0e2; overflow: hidden; }
.page { flex: 1; background: #fff; color: #000; padding: 13px 0 0 119px; border-left: 1px solid #9aa8bf; }
.page p { line-height: 19px; height: 19px; white-space: pre; }

.eng { position: absolute; left: 711px; right: 0; top: 500px; bottom: 0; background: #d4d0c8; border: solid #f0eee8; border-width: 1px 0 0 1px; padding: 2px 0 0 3px; display: flex; flex-direction: column; overflow: hidden; }
.tbar.blue { background: linear-gradient(90deg, #0f2a6c, #a6c4ec); color: #fff; gap: 2px; padding-left: 2px; }
.mdi { height: 20px; flex: none; padding: 2px 0 0 4px; }
.emenu { height: 27px; flex: none; display: flex; align-items: center; gap: 10px; padding: 0 0 3px 5px; background: linear-gradient(#dfeafc, #d3e4fd 50%, #b7d2fb); border-top: 1px solid #808890; border-bottom: 1px solid #6c8ab8; color: #1a3f86; }
.emenu select { width: 99px; height: 21px; border: 1px solid #a9c3e8; margin-left: -4px; background: #e6effd conic-gradient(from -35deg at 50% 100%, #1a3f86 70deg, transparent 0) no-repeat right 4px center / 7px 4px; }
.ebody { flex: 1; min-height: 0; display: flex; background: linear-gradient(#e1ecff, #d5e7fb); }
.enav { width: 66px; flex: none; background: linear-gradient(#e3edff, #b9d6fd); padding: 5px 5px 0 3px; }
.enav button { width: 58px; height: 45px; border: 1px solid #7f9fd0; border-radius: 2px; background: linear-gradient(#d9e6fb, #a9c8f8 55%, #c0d8fc); color: #1a4a96; display: flex; flex-direction: column; align-items: center; line-height: 16px; padding-top: 1px; }
.elists { flex: none; width: 463px; border: solid #000; border-width: 2px 1px 0 3px; padding: 3px 0 0 3px; display: flex; gap: 4px; overflow: hidden; }
.lst { border: 1px solid #000; border-bottom: 0; overflow: hidden; display: flex; }
.l1 { width: 145px; } .l2 { width: 300px; justify-content: space-between; }
.et { border-collapse: separate; border-spacing: 0; table-layout: fixed; width: 281px; flex: none; align-self: flex-start; }
.l1 .et { width: 165px; }
.k1 { width: 81px; } .k2 { width: 40px; } .k3 { width: 44px; } .k4 { width: 55px; } .k5 { width: 35px; }
.p1 { width: 26px; } .p2 { width: 140px; } .p3 { width: 150px; }
.et th { height: 20px; padding: 0 0 0 5px; text-align: left; font-weight: normal; line-height: 18px; background: linear-gradient(#f1f4f9, #d5dbe6); border: solid #9db0cc; border-width: 0 1px 1px 0; white-space: nowrap; }
.et.par th { height: 21px; padding-top: 2px; }
.et th.or { background: linear-gradient(#fbdb9c, #f3bd62); }
.et td { height: 23px; padding: 0 0 0 4px; border: solid #c5d3e6; border-width: 0 1px 1px 0; line-height: 20px; white-space: nowrap; overflow: hidden; }
.et .pick td { background: linear-gradient(#ffdfae, #fdb45a 45%, #fee88e); border-right-color: transparent; border-top: 1px dotted #000; border-bottom: 1px dotted #000; line-height: 18px; }
.et .bad { color: #e01010; }
.sb { width: 15px; background: linear-gradient(90deg, #7f9cc8, #9db6dc); display: flex; flex-direction: column; align-items: center; flex: none; }
.up { width: 9px; height: 5px; margin-top: 6px; background: #4a5f85; clip-path: polygon(50% 0, 100% 100%, 0 100%); }
.thumb { margin-top: 171px; flex: 1; align-self: stretch; background: linear-gradient(90deg, #e4e9f1, #bac7dc); border: 1px solid #6b7fa5; border-radius: 2px; display: flex; justify-content: center; padding-top: 143px; }
.thumb i { width: 9px; height: 8px; background: repeating-linear-gradient(#889 0 1px, transparent 1px 3px); }
.eright { flex: 1; min-width: 0; display: flex; flex-direction: column; border-left: 4px solid #d4d0c8; background: #d4d0c8; overflow: hidden; }
.efrm { height: 170px; flex: none; border: 1px solid #000; border-top-width: 2px; background: #e1ecff; padding: 4px 0 0 7px; display: flex; flex-direction: column; gap: 7px; overflow: hidden; font: 14px "Noto Sans", "Noto Sans CJK SC", sans-serif; }
.frow { display: flex; align-items: center; gap: 5px; flex: none; }
.frow label { flex: none; white-space: nowrap; }
.efrm input { height: 25px; background: #d4d0c8; border: 1px solid; border-color: #707070 #fff #fff #707070; padding-left: 2px; flex: none; font-size: 14px; }
.w-l { width: 134px; } .w-x { width: 136px; } .w-m { width: 62px; } .w-s { width: 54px; }
.elow { flex: 1; min-height: 0; display: flex; gap: 3px; padding-top: 3px; }
.ecol { width: 387px; flex: none; display: flex; flex-direction: column; gap: 4px; }
.pout { height: 293px; flex: none; border: 1px solid #000; background: #dbe8fb; padding: 3px; }
.pin { height: 100%; border: 1px solid #000; background: linear-gradient(#e1ecff, #d8e8fb); }
.pt { height: 24px; line-height: 22px; text-align: center; background: #dbe3f1; border-bottom: 1px solid #a9bad2; }
.et.par { width: 316px; }
.or2 { background: linear-gradient(#fbdb9c, #fde3b4); }
.pbot { flex: 1; border: 1px solid #000; background: #dce9fb; display: flex; gap: 25px; padding: 3px 0 0 26px; overflow: hidden; }
.pbot input { width: 145px; height: 24px; border: 1px solid #555; background: #d4d0c8; }
.eblank { flex: 1; border: solid #000; border-width: 1px 0 0 1px; background: linear-gradient(#e1ecff, #d5e9fc); }

.speed { position: absolute; right: 1px; top: 922px; display: flex; align-items: center; height: 50px; filter: drop-shadow(1px 3px 3px #0006); }
.ball { width: 49px; height: 49px; border-radius: 50%; border: 2px solid #eef4f0; background: radial-gradient(ellipse at 50% 12%, #ffffffb0, transparent 30%), linear-gradient(#16764a 55%, #52c860 55%); color: #fff; font: bold 14px/44px "Noto Sans", sans-serif; text-align: center; z-index: 1; }
.pill { margin-left: -14px; width: 71px; height: 39px; border-radius: 0 20px 20px 0; background: linear-gradient(#fff, #cfd4dc); border: 1px solid #a9b0ba; padding: 1px 9px 0 16px; font: 10px/18px "Noto Sans", sans-serif; display: flex; flex-direction: column; }
.pill span { display: flex; justify-content: space-between; white-space: nowrap; }
.pill i { font: bold 12px/18px "DejaVu Sans", sans-serif; color: #2a9a4a; }
.pill i.r { color: #e05a40; }
.mark { position: absolute; background: #ff0; mix-blend-mode: multiply; }
.m1 { left: 1305px; top: 376px; width: 224px; height: 33px; }
.m2 { left: 1406px; top: 835px; width: 68px; height: 23px; }
.ink { position: absolute; left: 0; top: 0; width: 100%; height: 100%; pointer-events: none; fill: none; stroke: #14f014; stroke-width: 3; filter: drop-shadow(2px 3px 2px #0008); }
.ink .tip { fill: #14f014; stroke: none; }
.note { position: absolute; left: 567px; top: 663px; width: 296px; height: 126px; background: #fff; border: 3px solid #e01010; box-shadow: 2px 3px 5px #0009; padding: 0 4px; font-size: 16px; line-height: 20px; font-weight: bold; }
.note span { font: bold 13px/18px "Liberation Sans", sans-serif; }
</style>
